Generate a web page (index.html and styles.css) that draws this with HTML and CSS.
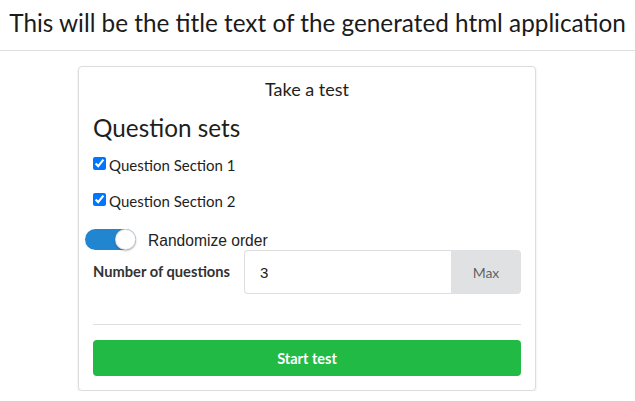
FILE: index.html
```html
<!DOCTYPE html>
<html>
<head>
<meta charset="utf-8">
<link rel="stylesheet" href="styles.css">
</head>
<body>
<header class="topbar">
  <h1 class="title">This will be the title text of the generated html application</h1>
</header>
<main class="page">
  <section class="card">
    <div class="card-head">Take a test</div>
    <h2 class="sets-title">Question sets</h2>
    <label class="check"><input type="checkbox" checked><span>Question Section 1</span></label>
    <label class="check"><input type="checkbox" checked><span>Question Section 2</span></label>
    <div class="toggle-row">
      <span class="toggle"><span class="knob"></span></span>
      <span class="toggle-label">Randomize order</span>
    </div>
    <div class="num-row">
      <span class="num-label">Number of questions</span>
      <div class="input-group">
        <input class="num-input" type="text" value="3" size="3">
        <button class="max-btn">Max</button>
      </div>
    </div>
    <hr class="divider">
    <button class="start-btn">Start test</button>
  </section>
</main>
</body>
</html>
```
FILE: styles.css
```css
html, body {
  margin: 0;
  padding: 0;
  background: #fff;
  font-family: Lato, "Noto Sans", sans-serif;
  color: rgba(0,0,0,0.87);
}
.topbar {
  height: 50px;
  border-bottom: 1px solid #dededf;
  display: flex;
  align-items: center;
  justify-content: center;
}
.title {
  margin: 0;
  font-size: 24.3px;
  font-weight: 400;
  line-height: 1;
  margin-top: -4px;
  color: #1b1b1b;
  white-space: nowrap;
}
.page {
  display: flex;
  justify-content: center;
  padding-top: 15px;
}
.card {
  width: 428px;
  margin-left: -21px;
  padding: 10px 14px 14px;
  border: 1px solid #dcdcdd;
  border-radius: 4px;
  box-shadow: 0 1px 2px rgba(34,36,38,0.15);
  display: flex;
  flex-direction: column;
}
.card-head {
  text-align: center;
  font-size: 18px;
  line-height: 24px;
  color: #1e1e1e;
}
.sets-title {
  margin: 12px 0 12px;
  font-size: 24.3px;
  font-weight: 400;
  line-height: 30px;
  color: #1e1e1e;
}
.check {
  display: flex;
  align-items: center;
  font-size: 15px;
  height: 20px;
  margin-bottom: 16px;
  color: #1e1e1e;
}
.check input {
  margin: 0 3px 0 0;
  width: 13px;
  height: 13px;
  accent-color: #0075ff;
  position: relative;
  top: -2px;
}
.toggle-row {
  display: flex;
  align-items: center;
  margin-left: -8px;
  margin-top: 0;
  height: 24px;
}
.toggle {
  width: 51px;
  height: 21px;
  border-radius: 11px;
  background: #2185d0;
  position: relative;
  display: inline-block;
}
.knob {
  position: absolute;
  right: 0;
  top: 0;
  width: 21px;
  height: 21px;
  border-radius: 50%;
  background: #fff;
  box-shadow: 0 1px 2px rgba(34,36,38,0.3), inset 0 0 0 1px rgba(34,36,38,0.15);
}
.toggle-label {
  margin-left: 12px;
  font-family: "Liberation Sans", Arial, sans-serif;
  font-size: 15.6px;
  color: #222;
  margin-top: 3px;
}
.num-row {
  display: flex;
  align-items: center;
  height: 44px;
  margin-top: -1px;
}
.num-label {
  width: 151px;
  flex-shrink: 0;
  white-space: nowrap;
  font-size: 14.7px;
  font-weight: 700;
  color: #333;
  margin-top: -2px;
}
.input-group {
  flex: 1;
  min-width: 0;
  display: flex;
  height: 44px;
}
.num-input {
  flex: 1;
  min-width: 0;
  width: 0;
  border: 1px solid rgba(34,36,38,0.15);
  border-right: none;
  border-radius: 4px 0 0 4px;
  padding: 0 15px;
  font-family: "Liberation Sans", Arial, sans-serif;
  font-size: 15px;
  color: #222;
  outline: none;
}
.max-btn {
  width: 70px;
  flex-shrink: 0;
  border: none;
  background: #e0e1e2;
  border-radius: 0 4px 4px 0;
  font-family: Lato, sans-serif;
  font-size: 14px;
  color: rgba(0,0,0,0.6);
}
.divider {
  border: none;
  border-top: 1px solid #dededf;
  margin: 30px 0 15px;
}
.start-btn {
  height: 36px;
  border: none;
  border-radius: 4px;
  background: #21ba45;
  color: #fff;
  font-family: Lato, sans-serif;
  font-weight: 700;
  font-size: 14.5px;
}
```
